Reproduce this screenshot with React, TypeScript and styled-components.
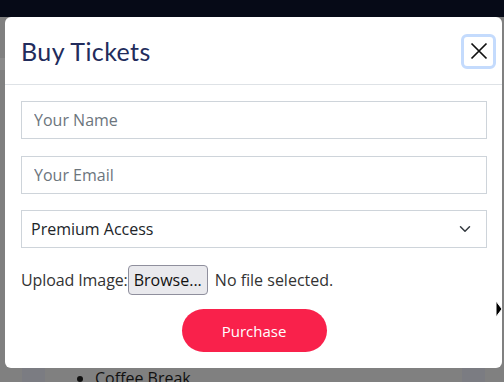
import React from 'react';
import styled, { createGlobalStyle } from 'styled-components';

const GlobalStyle = createGlobalStyle`
    html, body {
        margin:0;
        padding:0;
        width:504px;
        height:382px;
        overflow:hidden;
        font-family:"Open Sans", "Noto Sans", sans-serif;
    }
    * { box-sizing:border-box; }
`;

const fields = [
    { placeholder:'Your Name' },
    { placeholder:'Your Email' },
];

const App = () => {
  return (
    <Page>
        <GlobalStyle />
        <Behind>
            <TopBar />
            <Under>
                <SideStrip />
                <BottomRow>
                    <Block />
                    <ListText>
                        <li>Coffee Break</li>
                    </ListText>
                    <Block $right />
                </BottomRow>
            </Under>
        </Behind>

        <Modal>
            <Header>
                <Title>Buy Tickets</Title>
                <CloseButton aria-label="close">
                    <svg width="20" height="20" viewBox="0 0 16 16">
                        <path d="M2 2 L14 14 M14 2 L2 14" stroke="#111" strokeWidth="1.4" fill="none" />
                    </svg>
                </CloseButton>
            </Header>
            <Body>
                {fields.map((f) =>
                    <Field key={f.placeholder} placeholder={f.placeholder} />
                )}
                <SelectBox>
                    <span>Premium Access</span>
                    <svg width="12" height="12" viewBox="0 0 16 16">
                        <path d="M2 5 L8 11 L14 5" stroke="#343a40" strokeWidth="2" fill="none" strokeLinecap="round" strokeLinejoin="round" />
                    </svg>
                </SelectBox>
                <UploadRow>
                    <span>Upload Image:</span>
                    <Browse>Browse...</Browse>
                    <span>No file selected.</span>
                </UploadRow>
                <Actions>
                    <Purchase>Purchase</Purchase>
                </Actions>
            </Body>
            <Pointer width="8" height="18" viewBox="0 0 8 18">
                <path d="M1 1 L7 9 L1 17 Z" fill="#000" stroke="#fff" strokeWidth="1" />
            </Pointer>
        </Modal>
    </Page>
  )
}

export default App;

const Page = styled.div`
    position:relative;
    width:504px;
    height:382px;
    overflow:hidden;
    background:#808080;
`;

const Behind = styled.div`
    display:flex;
    flex-direction:column;
    height:100%;
`;

const TopBar = styled.div`
    height:17px;
    background:#060a17;
`;

const Under = styled.div`
    flex:1;
    display:flex;
    flex-direction:column;
    justify-content:space-between;
    background:#808080;
`;

const SideStrip = styled.div`
    margin-top:41px;
    width:5px;
    height:12px;
    background:#8a8a8a;
`;

const BottomRow = styled.div`
    height:14px;
    display:flex;
    padding-left:22px;
`;

const Block = styled.div<{ $right?: boolean }>`
    width:23px;
    height:100%;
    background:#7b7c82;
    margin-left:${p => p.$right ? 'auto' : '0'};
    margin-right:${p => p.$right ? '19px' : '0'};
`;

const ListText = styled.ul`
    margin:0 0 0 15px;
    padding:0 0 0 35px;
    font-size:16px;
    line-height:22px;
    color:#111;
    & > li{
        margin-top:-1px;
    }
`;

const Modal = styled.div`
    position:absolute;
    top:17px;
    left:5px;
    width:497px;
    height:351px;
    background:#fff;
    border-radius:6px;
    display:flex;
    flex-direction:column;
`;

const Header = styled.div`
    height:68px;
    display:flex;
    align-items:center;
    justify-content:space-between;
    padding:0 6px 0 16px;
    border-bottom:1px solid #dee2e6;
`;

const Title = styled.div`
    font-family:"Lato", "Noto Sans", sans-serif;
    font-size:25px;
    font-weight:400;
    color:#222c5c;
    letter-spacing:0.4px;
    margin-top:1px;
`;

const CloseButton = styled.button`
    width:35px;
    height:35px;
    padding:0;
    display:flex;
    align-items:center;
    justify-content:center;
    background:#fff;
    border:3px solid #c4dbfd;
    border-radius:6px;
    margin-top:1px;
`;

const Body = styled.div`
    display:flex;
    flex-direction:column;
    gap:17px;
    padding:16px 15px 0 16px;
`;

const Field = styled.input`
    height:38px;
    width:100%;
    border:1px solid #ced4da;
    padding:0 12px;
    font-family:"Open Sans", sans-serif;
    font-size:16px;
    color:#212529;
    outline:none;
    &::placeholder{
        color:#6c757d;
    }
`;

const SelectBox = styled.div`
    height:38px;
    display:flex;
    align-items:center;
    justify-content:space-between;
    border:1px solid #ced4da;
    padding:0 15px 0 9px;
    font-size:16px;
    color:#212529;
    margin-top:-1px;
`;

const UploadRow = styled.div`
    display:flex;
    align-items:center;
    font-size:16px;
    color:#333;
    & > span:first-child{
        letter-spacing:-0.1px;
    }
    & > span:last-child{
        margin-left:7px;
    }
`;

const Browse = styled.div`
    height:30px;
    padding:0 5px;
    display:flex;
    align-items:center;
    background:#e9e9ed;
    border:1px solid #8f8f9d;
    border-radius:4px;
    color:#111;
`;

const Actions = styled.div`
    display:flex;
    justify-content:center;
    margin-top:-3px;
`;

const Purchase = styled.button`
    width:145px;
    height:43px;
    border:none;
    border-radius:22px;
    background:#f9214b;
    color:#fff;
    font-family:"Open Sans", sans-serif;
    font-size:15px;
`;

const Pointer = styled.svg`
    position:absolute;
    right:-1px;
    top:283px;
`;
